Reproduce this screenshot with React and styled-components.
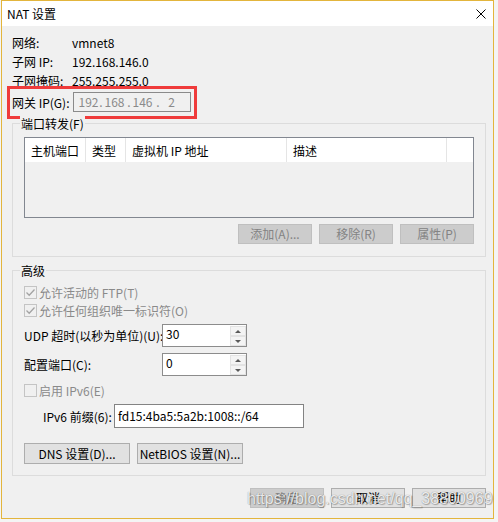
import React from "react";
import styled, { createGlobalStyle } from "styled-components";

const Global = createGlobalStyle`
  html, body { margin: 0; padding: 0; background: #f4f4f4; }
  body {
    font-family: "Noto Sans CJK SC", "Noto Sans", sans-serif;
    font-size: 12px;
    color: #000;
  }
  * { box-sizing: border-box; }
`;

const Page = styled.div`
  position: relative;
  width: 498px;
  height: 522px;
  padding-left: 1px;
  overflow: hidden;
`;

const Window = styled.div`
  width: 493px;
  height: 519px;
  border: 1px solid #e3b53c;
  background: #f0f0f0;
  display: flex;
  flex-direction: column;
`;

const TitleBar = styled.div`
  flex: none;
  height: 25px;
  background: #fff;
  display: flex;
  align-items: center;
  justify-content: space-between;
  padding: 0 7px 0 5px;
  line-height: 16px;
`;

const Body = styled.div`
  flex: 1;
  display: flex;
  flex-direction: column;
  padding: 7px 7px 10px 10px;
`;

const InfoRow = styled.div`
  display: grid;
  grid-template-columns: 60px auto;
  height: 19px;
  line-height: 19px;
`;

const GatewayRow = styled.div`
  position: relative;
  align-self: flex-start;
  display: flex;
  align-items: center;
  height: 20px;
  margin-top: 2px;
  &::after {
    content: "";
    position: absolute;
    left: -5px;
    right: -6px;
    top: -6px;
    bottom: -7px;
    border: 3px solid #ef3b3b;
    pointer-events: none;
  }
`;

const GatewayLabel = styled.span`
  width: 61px;
`;

const IpBox = styled.div`
  width: 118px;
  height: 20px;
  border: 1px solid #8a8a8a;
  background: #f0f0f0;
  color: #8a8a8a;
  display: flex;
  align-items: center;
  padding-left: 7px;
  white-space: pre;
  line-height: 16px;
`;

const IpPart = styled.span`
  width: ${(p) => p.$w}px;
  flex: none;
  display: flex;
  justify-content: center;
`;

const Group = styled.section`
  position: relative;
  border: 1px solid #dcdcdc;
  margin-top: ${(p) => p.$mt}px;
  padding: ${(p) => p.$pad};
  display: flex;
  flex-direction: column;
`;

const GroupTitle = styled.span`
  position: absolute;
  top: -8px;
  left: 7px;
  padding: 0 1px;
  background: #f0f0f0;
  line-height: 16px;
`;

const Table = styled.div`
  height: 81px;
  border: 1px solid #828790;
  background: #f0f0f0;
`;

const HeaderRow = styled.div`
  display: grid;
  grid-template-columns: 61px 40px 161px 160px 1fr;
  height: 24px;
  background: #fff;
`;

const HeaderCell = styled.div`
  display: flex;
  align-items: center;
  padding-left: 6px;
  border-right: ${(p) => (p.$last ? "none" : "1px solid #e5e5e5")};
  white-space: nowrap;
`;

const ButtonRow = styled.div`
  display: flex;
  justify-content: ${(p) => (p.$start ? "flex-start" : "flex-end")};
  gap: 7px;
  margin-top: ${(p) => p.$mt}px;
`;

const Button = styled.div`
  width: ${(p) => p.$w || 74}px;
  height: ${(p) => p.$h || 20}px;
  display: flex;
  align-items: center;
  justify-content: center;
  border: 1px solid ${(p) => (p.$disabled ? "#bfbfbf" : "#adadad")};
  background: ${(p) => (p.$disabled ? "#cccccc" : "#e1e1e1")};
  color: ${(p) => (p.$disabled ? "#838383" : "#000")};
  white-space: nowrap;
  line-height: 16px;
`;

const CheckRow = styled.div`
  display: flex;
  align-items: center;
  gap: 2px;
  height: 18px;
  margin-top: ${(p) => p.$mt || 0}px;
  color: #8a8a8a;
`;

const CheckBox = styled.span`
  width: 13px;
  height: 13px;
  flex: none;
  border: 1px solid #c4c4c4;
  background: #f0f0f0;
  display: flex;
  align-items: center;
  justify-content: center;
`;

const FieldRow = styled.div`
  display: flex;
  align-items: center;
  margin-top: ${(p) => p.$mt}px;
  padding-left: ${(p) => p.$indent || 0}px;
`;

const FieldLabel = styled.span`
  width: ${(p) => p.$w}px;
  flex: none;
  white-space: nowrap;
`;

const Spinner = styled.div`
  width: 85px;
  height: 23px;
  border: 1px solid #8c8c8c;
  background: #fff;
  display: flex;
`;

const SpinValue = styled.div`
  flex: 1;
  padding: 1px 0 0 3px;
  line-height: 16px;
`;

const SpinButtons = styled.div`
  width: 16px;
  display: flex;
  flex-direction: column;
  padding-top: 1px;
`;

const SpinBtn = styled.div`
  height: 10px;
  border: 1px solid #e3e3e3;
  background: #f4f4f4;
  display: flex;
  align-items: center;
  justify-content: center;
  &::before {
    content: "";
    border-left: 3px solid transparent;
    border-right: 3px solid transparent;
    ${(p) =>
      p.$down
        ? "border-top: 3px solid #5a5a5a;"
        : "border-bottom: 3px solid #5a5a5a;"}
  }
`;

const TextBox = styled.div`
  width: 190px;
  height: 24px;
  border: 1px solid #838383;
  background: #fff;
  display: flex;
  align-items: center;
  padding-left: 3px;
  line-height: 16px;
`;

const Watermark = styled.div`
  position: absolute;
  left: 247px;
  top: 490px;
  font-family: "Liberation Sans", Arial, sans-serif;
  font-size: 16px;
  line-height: 18px;
  color: rgba(255, 255, 255, 0.85);
  text-shadow: 0 0 1px rgba(0, 0, 0, 0.45), 1px 1px 1px rgba(0, 0, 0, 0.25);
  pointer-events: none;
  white-space: nowrap;
`;

const Check = () => (
  <svg width="11" height="11" viewBox="0 0 11 11">
    <path d="M1.5 5.5 L4.2 8.2 L9.5 2.5" fill="none" stroke="#a3a3a3" strokeWidth="1.3" />
  </svg>
);

const CloseIcon = () => (
  <svg width="10" height="10" viewBox="0 0 10 10">
    <path d="M0.5 0.5 L9.5 9.5 M9.5 0.5 L0.5 9.5" stroke="#000" strokeWidth="1" />
  </svg>
);

const SpinBox = ({ value }) => (
  <Spinner>
    <SpinValue>{value}</SpinValue>
    <SpinButtons>
      <SpinBtn />
      <SpinBtn $down />
    </SpinButtons>
  </Spinner>
);

const ipParts = [
  ["192", 15],
  [".", 10],
  ["168", 17],
  [".", 12],
  ["146", 15],
  [".", 16],
  ["2", 11],
];

export default function App() {
  return (
    <Page>
      <Global />
      <Window>
        <TitleBar>
          <span>NAT 设置</span>
          <CloseIcon />
        </TitleBar>
        <Body>
          <InfoRow>
            <span>网络:</span>
            <span>vmnet8</span>
          </InfoRow>
          <InfoRow>
            <span>子网 IP:</span>
            <span>192.168.146.0</span>
          </InfoRow>
          <InfoRow>
            <span>子网掩码:</span>
            <span>255.255.255.0</span>
          </InfoRow>
          <GatewayRow>
            <GatewayLabel>网关 IP(G):</GatewayLabel>
            <IpBox>
              {ipParts.map(([t, w], i) => (
                <IpPart key={i} $w={w}>
                  {t}
                </IpPart>
              ))}
            </IpBox>
          </GatewayRow>

          <Group $mt={11} $pad="13px 11px 12px 11px">
            <GroupTitle>端口转发(F)</GroupTitle>
            <Table>
              <HeaderRow>
                <HeaderCell>主机端口</HeaderCell>
                <HeaderCell>类型</HeaderCell>
                <HeaderCell>虚拟机 IP 地址</HeaderCell>
                <HeaderCell>描述</HeaderCell>
                <HeaderCell $last />
              </HeaderRow>
            </Table>
            <ButtonRow $mt={6}>
              <Button $disabled>添加(A)...</Button>
              <Button $disabled>移除(R)</Button>
              <Button $disabled>属性(P)</Button>
            </ButtonRow>
          </Group>

          <Group $mt={13} $pad="12px 11px 11px 11px">
            <GroupTitle>高级</GroupTitle>
            <CheckRow>
              <CheckBox>
                <Check />
              </CheckBox>
              <span>允许活动的 FTP(T)</span>
            </CheckRow>
            <CheckRow>
              <CheckBox>
                <Check />
              </CheckBox>
              <span>允许任何组织唯一标识符(O)</span>
            </CheckRow>
            <FieldRow $mt={5}>
              <FieldLabel $w={138}>UDP 超时(以秒为单位)(U):</FieldLabel>
              <SpinBox value="30" />
            </FieldRow>
            <FieldRow $mt={6}>
              <FieldLabel $w={138}>配置端口(C):</FieldLabel>
              <SpinBox value="0" />
            </FieldRow>
            <CheckRow $mt={5}>
              <CheckBox />
              <span>启用 IPv6(E)</span>
            </CheckRow>
            <FieldRow $mt={5} $indent={19}>
              <FieldLabel $w={71}>IPv6 前缀(6):</FieldLabel>
              <TextBox>fd15:4ba5:5a2b:1008::/64</TextBox>
            </FieldRow>
            <ButtonRow $start $mt={15}>
              <Button $w={106} $h={21}>DNS 设置(D)...</Button>
              <Button $w={106} $h={21}>NetBIOS 设置(N)...</Button>
            </ButtonRow>
          </Group>

          <ButtonRow $mt={12}>
            <Button $disabled>确定</Button>
            <Button>取消</Button>
            <Button>帮助</Button>
          </ButtonRow>
        </Body>
      </Window>
      <Watermark>https://blog.csdn.net/qq_38800969</Watermark>
    </Page>
  );
}
